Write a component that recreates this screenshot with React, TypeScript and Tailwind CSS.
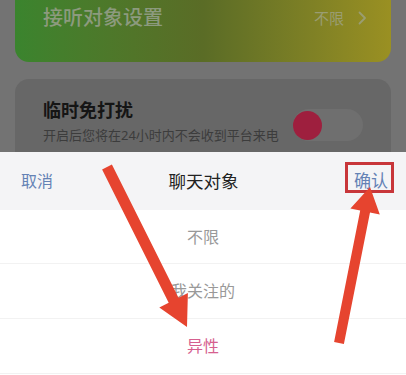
import React from "react";

const font = { fontFamily: '"Noto Sans", "Noto Sans CJK SC", sans-serif' };

export default function App() {
  return (
    <div
      className="relative w-[406px] h-[375px] overflow-hidden bg-[#737373] flex flex-col"
      style={font}
    >
      {/* top card (gradient) */}
      <div className="mx-[15px] h-[62px] rounded-b-[14px] bg-gradient-to-r from-[#3a842e] via-[#5a6c26] to-[#9a9022] flex items-start justify-between pl-[28px] pr-[24px] pt-[3px]">
        <span className="text-[20px] leading-[30px] font-medium text-[#8c9a7e]">接听对象设置</span>
        <span className="flex items-center gap-[14px] text-[15px] leading-[30px] text-[#9a9d72]">
          不限
          <svg width="9" height="14" viewBox="0 0 9 14" fill="none">
            <path d="M1.5 1.5L7 7l-5.5 5.5" stroke="#9a9d72" strokeWidth="1.8" strokeLinecap="round" strokeLinejoin="round" />
          </svg>
        </span>
      </div>

      {/* second card */}
      <div className="mx-[15px] mt-[17px] h-[100px] rounded-[14px] bg-[#676767] flex items-start justify-between pl-[28px] pr-[28px] pt-[18px]">
        <div className="flex flex-col">
          <span className="text-[18px] leading-[26px] font-bold text-[#151515]">临时免打扰</span>
          <span className="text-[13px] leading-[20px] mt-[2px] text-[#3c3c3c]">开启后您将在24小时内不会收到平台来电</span>
        </div>
        <div className="mt-[12px] w-[70px] h-[32px] rounded-full bg-[#6f6f6f] flex items-center">
          <div className="w-[29px] h-[29px] rounded-full bg-[#9e1f3e]" />
        </div>
      </div>

      {/* bottom sheet */}
      <div className="absolute left-0 right-0 bottom-0 h-[223px] bg-white flex flex-col">
        <div className="h-[58px] bg-[#f4f4f6] flex items-center justify-between pl-[21px] pr-[18px] text-[17px]">
          <span className="text-[#6482b5] text-[16px]">取消</span>
          <span className="text-[#222] text-[17.5px]">聊天对象</span>
          <span className="text-[#6482b5]">确认</span>
        </div>
        <div className="h-[54px] flex items-center justify-center border-b border-[#f2f2f2] text-[16px] text-[#999]">不限</div>
        <div className="h-[55px] flex items-center justify-center border-b border-[#f2f2f2] text-[16px] text-[#999]">我关注的</div>
        <div className="h-[55px] flex items-center justify-center border-b border-[#f2f2f2] text-[16px] text-[#d6608f]">异性</div>
      </div>

      {/* annotation overlay */}
      <svg className="absolute left-0 top-0" width="406" height="375" viewBox="0 0 406 375">
        <rect x="346.5" y="163.5" width="46" height="28" fill="none" stroke="#c8363a" strokeWidth="3" />
        <polygon
          points="111.9,164.5 178.5,297.7 187.9,293 187,327 159.3,307.4 168.7,302.7 102.1,169.5"
          fill="#e6442f"
        />
        <polygon
          points="343.9,344 370,212.5 379.8,214.4 370,187 350.4,208.6 360.2,210.5 334.1,342"
          fill="#e6442f"
        />
      </svg>
    </div>
  );
}
